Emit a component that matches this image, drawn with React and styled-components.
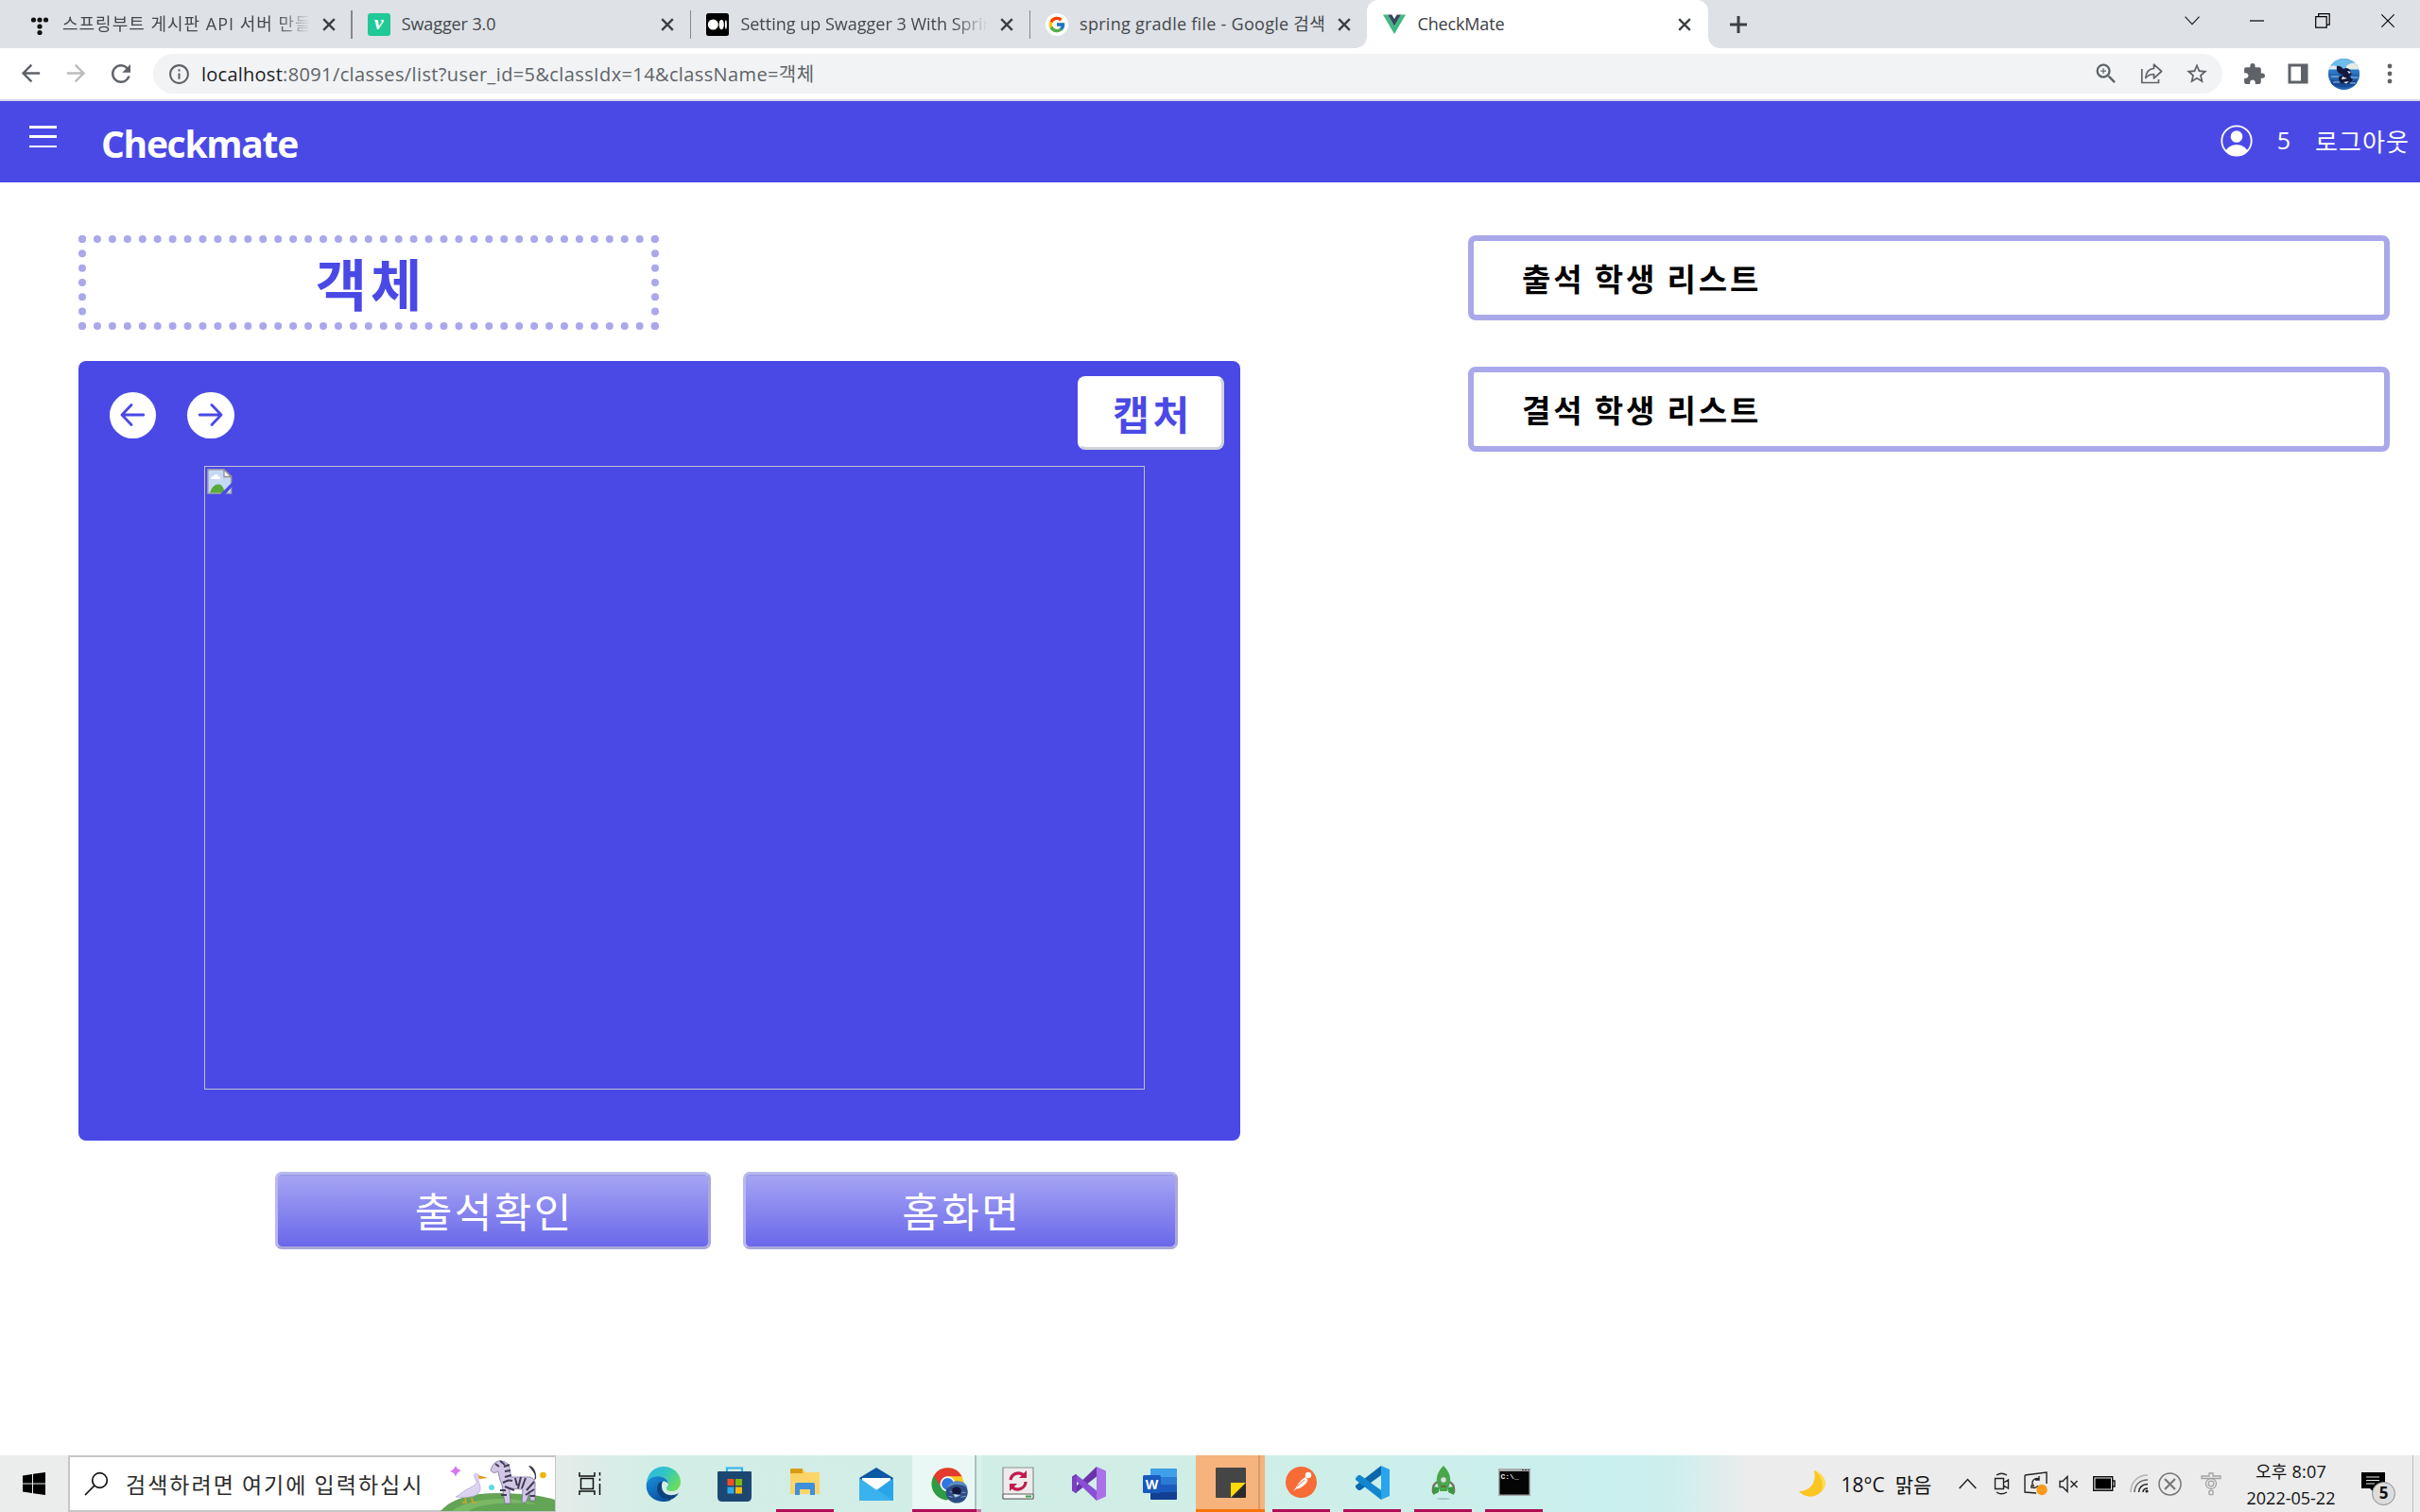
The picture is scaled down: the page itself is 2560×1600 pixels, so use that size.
import React from "react";
import styled, { createGlobalStyle, css } from "styled-components";
import { MdArrowBack, MdArrowForward, MdRefresh, MdInfoOutline, MdZoomIn, MdStarBorder, MdExtension } from "react-icons/md";

const PURPLE = "#4a49e6";
const LILAC = "#aaa8ea";
const UI = '"Open Sans", "Noto Sans CJK KR", sans-serif';
const KR = '"Noto Sans CJK KR", "Open Sans", sans-serif';

const Global = createGlobalStyle`
  * { box-sizing: border-box; }
  html, body { margin: 0; padding: 0; background: #fff; }
  body { font-family: ${UI}; overflow: hidden; }
  svg { display: block; flex: none; }
`;

const Screen = styled.div`
  width: 2560px;
  height: 1600px;
  display: flex;
  flex-direction: column;
  background: #fff;
`;

const Label = styled.span`
  display: block;
  flex: none;
  white-space: nowrap;
  font-family: ${(p) => (p.$kr ? KR : UI)};
  font-size: ${(p) => p.$size}px;
  font-weight: ${(p) => p.$weight || 400};
  letter-spacing: ${(p) => p.$track || 0}px;
  line-height: ${(p) => p.$line || p.$size * 1.4}px;
  color: ${(p) => p.$color || "inherit"};
  margin-top: ${(p) => p.$drop || 0}px;
`;

/* ---------- tab strip ---------- */

const TabStrip = styled.div`
  height: 51px;
  flex: none;
  display: flex;
  background: #dee1e6;
  padding-left: 13px;
`;

const Tab = styled.div`
  position: relative;
  width: ${(p) => p.$w || 358.7}px;
  height: 51px;
  flex: none;
  display: flex;
  align-items: center;
  padding: 0 17px;
  gap: 12px;
  color: #45484c;
  ${(p) =>
    p.$active &&
    css`
      background: #fff;
      border-radius: 12px 12px 0 0;
      color: #3c4043;
      padding-right: 18px;
      &::before,
      &::after {
        content: "";
        position: absolute;
        bottom: 0;
        width: 12px;
        height: 12px;
      }
      &::before {
        left: -12px;
        background: radial-gradient(circle at 0 0, transparent 11.5px, #fff 12px);
      }
      &::after {
        right: -12px;
        background: radial-gradient(circle at 100% 0, transparent 11.5px, #fff 12px);
      }
    `}
`;

const Divider = styled.div`
  position: absolute;
  right: -1px;
  top: 11px;
  width: 1.5px;
  height: 30px;
  background: #85888d;
`;

const TabTitle = styled.div`
  flex: 1;
  overflow: hidden;
  ${(p) => p.$fade && css`mask-image: linear-gradient(90deg, #000 calc(100% - 36px), transparent);`}
`;

const CloseBox = styled.div`
  width: 14px;
  margin-left: 1px;
  flex: none;
`;

const Velog = styled.div`
  width: 24px;
  height: 24px;
  border-radius: 3px;
  background: #20c997;
  color: #fff;
  display: flex;
  justify-content: center;
  font: italic bold 22px/20px "Liberation Serif", serif;
`;

const WindowControls = styled.div`
  margin-left: auto;
  height: 43px;
  display: flex;
  align-items: center;
`;

const ControlSlot = styled.div`
  width: 69px;
  display: flex;
  justify-content: center;
`;

const NewTab = styled.div`
  display: flex;
  align-items: center;
  padding-left: 23px;
`;

const Cross = ({ size = 14, w = 2.4, color = "#3c4043" }) => (
  <svg width={size} height={size} viewBox="0 0 14 14">
    <path d="M1.2 1.2 12.8 12.8M12.8 1.2 1.2 12.8" stroke={color} strokeWidth={w} fill="none" />
  </svg>
);

const TistoryIcon = () => (
  <svg width="24" height="24" viewBox="0 0 24 24">
    {[[5.5, 7], [12, 7], [18.5, 7], [12, 14], [12, 20.5]].map(([x, y]) => (
      <circle key={x + "-" + y} cx={x} cy={y} r="2.6" fill="#111" />
    ))}
  </svg>
);

const MediumIcon = () => (
  <svg width="24" height="24" viewBox="0 0 24 24">
    <rect width="24" height="24" rx="2.5" fill="#000" />
    <circle cx="7.3" cy="12" r="5.5" fill="#fff" />
    <ellipse cx="16.2" cy="12" rx="2.6" ry="5.3" fill="#fff" />
    <ellipse cx="20.9" cy="12" rx="1" ry="4.8" fill="#fff" />
  </svg>
);

const GoogleIcon = () => (
  <svg width="24" height="24" viewBox="0 0 24 24">
    <circle cx="12" cy="12" r="12" fill="#fff" />
    <g transform="translate(2.1 2.1) scale(.412)">
      <path fill="#FFC107" d="M43.6 20H24v8h11.3C33.7 32.7 29.2 36 24 36c-6.6 0-12-5.4-12-12s5.4-12 12-12c3.1 0 5.8 1.2 7.9 3.1l5.7-5.7C34 6 29.3 4 24 4 13 4 4 13 4 24s9 20 20 20 20-9 20-20c0-1.3-.1-2.7-.4-4z" />
      <path fill="#FF3D00" d="m6.3 14.7 6.6 4.8C14.7 15.1 19 12 24 12c3.1 0 5.8 1.2 7.9 3.1l5.7-5.7C34 6 29.3 4 24 4 16.3 4 9.7 8.3 6.3 14.7z" />
      <path fill="#4CAF50" d="M24 44c5.2 0 9.9-2 13.4-5.2l-6.2-5.2C29.2 35.1 26.7 36 24 36c-5.2 0-9.6-3.3-11.3-7.9l-6.5 5C9.5 39.6 16.2 44 24 44z" />
      <path fill="#1976D2" d="M43.6 20H24v8h11.3c-.8 2.2-2.2 4.2-4.1 5.6l6.2 5.2C37 39.2 44 34 44 24c0-1.3-.1-2.7-.4-4z" />
    </g>
  </svg>
);

const VueIcon = () => (
  <svg width="24" height="24" viewBox="0 0 24 24">
    <path d="M0 1.5h5l7 12 7-12h5L12 22z" fill="#41b883" />
    <path d="M5 1.5h4.3L12 6l2.7-4.500H19l-7 12z" fill="#35495e" />
  </svg>
);

/* ---------- address bar ---------- */

const Toolbar = styled.div`
  height: 56px;
  flex: none;
  display: flex;
  align-items: center;
  background: #fff;
  border-bottom: 2px solid #d6d6ec;
  padding: 0 20px;
`;

const Slot = styled.div`
  width: ${(p) => p.$w || 24}px;
  flex: none;
  display: flex;
  justify-content: center;
  color: ${(p) => p.$c || "#5f6368"};
`;

const NavButtons = styled.div`
  display: flex;
  gap: 24px;
  width: 142px;
  flex: none;
`;

const Omnibox = styled.div`
  width: 2189px;
  height: 42px;
  flex: none;
  border-radius: 21px;
  background: #f1f3f4;
  display: flex;
  align-items: center;
  padding: 0 15px;
  gap: 12px;
`;

const UrlText = styled.div`
  display: flex;
  flex: 1;
`;

const OmniActions = styled.div`
  display: flex;
  align-items: center;
  gap: 24px;
`;

const BrowserActions = styled.div`
  display: flex;
  align-items: center;
  margin-left: 18px;
  gap: 20px;
`;

const ShareIcon = () => (
  <svg width="24" height="24" viewBox="0 0 24 24" fill="none" stroke="#5f6368" strokeWidth="1.7">
    <path d="M1.8 7v14.5h17.7v-3.6" />
    <path d="M14.5 2.2v4.3C8.8 6.8 6.3 11 5.8 16.5c2.3-3 5-4 8.700-4v4.300L22.600 9.500z" strokeLinejoin="round" />
  </svg>
);

const PanelIcon = () => (
  <svg width="22" height="22" viewBox="0 0 22 22">
    <rect x="2" y="2" width="18" height="18" fill="#fff" stroke="#5f6368" strokeWidth="3" />
    <rect x="14" y="1" width="7" height="20" fill="#5f6368" />
  </svg>
);

const WhaleAvatar = () => (
  <svg width="33" height="33" viewBox="0 0 33 33">
    <defs>
      <clipPath id="avatar"><circle cx="16.5" cy="16.5" r="16.5" /></clipPath>
    </defs>
    <g clipPath="url(#avatar)">
      <rect width="33" height="33" fill="#2465b4" />
      <rect width="33" height="12" fill="#6fbbea" />
      <path d="M0 10c3-3 6-3 10-1v2H0zM19 8c5-4 9-4 14-1v4H19z" fill="#e9ebe6" />
      <path d="M0 12h33v4H0z" fill="#2f77c4" />
      <path d="M3 22c6 3 18 4 27 0v5c-8 5-20 4-27 0z" fill="#164a94" />
      <path d="M9 8c3-1 5 1 7 3 3-2 5-1 7 1 2 3 2 6-1 7l4 3c-2 4-7 6-12 4-3-2-4-5-2-7 1-1 3-1 4-2-5 0-8-4-7-9z" fill="#14193d" />
      <path d="M20 13l4 1-2 2zM15 19l5 2-6 1zM16 25l6-1-3 2.5z" fill="#f4f6f8" />
      <path d="M3 19h8M24 20h7M5 25h7M23 26h6" stroke="#9ccbee" strokeWidth="1" />
    </g>
  </svg>
);

/* ---------- app header ---------- */

const AppHeader = styled.header`
  height: 86px;
  flex: none;
  background: ${PURPLE};
  color: #fff;
  display: flex;
  align-items: flex-start;
  padding: 0 11px 0 31px;
`;

const MenuLines = styled.div`
  width: 29px;
  margin: 26px 47px 0 0;
  display: flex;
  flex-direction: column;
  gap: 7.8px;
  & > i {
    height: 2.5px;
    background: #fff;
  }
`;

const UserArea = styled.div`
  margin: 23.5px 0 0 auto;
  display: flex;
  align-items: center;
`;

/* ---------- page content ---------- */

const Page = styled.main`
  flex: 1;
  display: flex;
  align-items: flex-start;
  padding: 56px 32px 0 83px;
`;

const ClassColumn = styled.section`
  width: 1229px;
  margin-right: 241px;
  display: flex;
  flex-direction: column;
`;

const ClassTitle = styled.h1`
  margin: 0 0 33px;
  padding-left: 4px;
  width: 614px;
  height: 100px;
  border: 8px dotted ${LILAC};
  display: flex;
  justify-content: center;
`;

const CapturePanel = styled.div`
  height: 825px;
  border-radius: 8px;
  background: ${PURPLE};
  padding: 16px 17px 0 32.5px;
`;

const PanelTop = styled.div`
  display: flex;
  align-items: flex-start;
  height: 95px;
`;

const RoundButton = styled.button`
  width: 49.5px;
  height: 49.5px;
  margin: 16.5px 33px 0 0;
  padding: 0;
  border: 0;
  border-radius: 50%;
  background: #fff;
  display: flex;
  align-items: center;
  justify-content: center;
`;

const CaptureButton = styled.button`
  width: 155px;
  height: 78px;
  margin: 0 0 0 auto;
  padding: 0 0 0 4px;
  border: 3px solid #fff;
  border-right-color: #cfd4d8;
  border-bottom-color: #cfd4d8;
  border-radius: 8px;
  background: #fff;
  display: flex;
  justify-content: center;
`;

const MissingImage = styled.div`
  width: 995px;
  height: 660px;
  margin-left: 100.5px;
  border: 1px solid #c0c0d6;
  padding: 2px;
`;

const BrokenIcon = () => (
  <svg width="27" height="27" viewBox="0 0 27 27">
    <path d="M1 1h17l7.5 7v18H1z" fill="#c6d9f5" stroke="#a6a6a6" strokeWidth="1.5" />
    <path d="M4 11c0-3 3-3 3.500-4 2-2 4-1 4.500 1 3 0 2 3 1 3z" fill="#fff" />
    <path d="M3 25.500c2-6 5-9 9-9 3 0 5 2 7 9z" fill="#5aa93c" />
    <path d="M18 1v7.500h7.500z" fill="#fff" stroke="#8d8d8d" strokeWidth="1.300" />
    <path d="M27 14 14 27h5.500L27 18.500z" fill={PURPLE} />
  </svg>
);

const ActionRow = styled.div`
  display: flex;
  gap: 34px;
  margin: 33px 0 0 208px;
`;

const ActionButton = styled.button`
  width: 460.5px;
  height: 82px;
  padding: 0 0 0 3px;
  border: 3px solid;
  border-color: #b9b8f0 #a9a8de #a9a8d8 #b9b8f0;
  border-radius: 7px;
  background: linear-gradient(#a6a5f3, #6a68ea) padding-box;
  box-shadow: inset 0 1px 0 #9796e3;
  color: #fff;
  display: flex;
  justify-content: center;
`;

const ListColumn = styled.section`
  flex: 1;
  display: flex;
  flex-direction: column;
  gap: 49px;
`;

const ListBox = styled.div`
  height: 90px;
  border: 6px solid ${LILAC};
  border-radius: 8px;
  padding-left: 51px;
  color: #000;
`;

/* ---------- taskbar ---------- */

const Taskbar = styled.footer`
  height: 60px;
  flex: none;
  display: flex;
  background: linear-gradient(90deg, #ebecec 0, #eaecec 560px, #d2ede5 690px, #d0eee6 1250px, #c9efee 1700px, #cdeeed 1770px, #ececec 1850px);
`;

const StartButton = styled.div`
  width: 72px;
  display: flex;
  align-items: center;
  justify-content: center;
`;

const SearchBox = styled.div`
  width: 516px;
  height: 60px;
  background: #fff;
  border: 2px solid #c6c6c6;
  border-right-width: 1px;
  display: flex;
  align-items: flex-start;
  padding-left: 15px;
`;

const SearchArt = styled.div`
  margin: -1px 0 0 auto;
`;

const TaskViewSlot = styled.div`
  width: 76px;
  padding-right: 3px;
  display: flex;
  align-items: center;
  justify-content: center;
`;

const AppSlot = styled.div`
  width: 75px;
  height: 60px;
  flex: none;
  display: flex;
  flex-direction: column;
  align-items: center;
  justify-content: space-between;
`;

const AppTile = styled.div`
  width: 73px;
  flex: 1;
  display: flex;
  align-items: center;
  justify-content: center;
  background: ${(p) => p.$bg || "transparent"};
`;

const RunBar = styled.div`
  width: ${(p) => p.$w || 61}px;
  height: 3px;
  background: ${(p) => p.$c || "#b10d55"};
`;

const Tray = styled.div`
  margin-left: auto;
  width: 660px;
  display: flex;
  align-items: center;
  color: #111;
`;

const TrayItem = styled.div`
  width: ${(p) => p.$w}px;
  padding-right: ${(p) => p.$pr || 0}px;
  flex: none;
  display: flex;
  justify-content: center;
`;

const Clock = styled.div`
  width: 123px;
  height: 60px;
  padding-right: 10px;
  display: flex;
  flex-direction: column;
  align-items: center;
`;

const Notice = styled.div`
  position: relative;
  width: 40px;
  height: 60px;
`;

const NoticeIcon = styled.div`
  padding: 18px 0 0 8px;
`;

const NoticeCount = styled.div`
  position: absolute;
  left: 19px;
  top: 28px;
  width: 25px;
  height: 25px;
  border-radius: 50%;
  border: 1.5px solid #8b8b8b;
  background: #dcdcdc;
  display: flex;
  justify-content: center;
`;

const DesktopEdge = styled.div`
  width: 1.5px;
  height: 60px;
  margin-left: 21.5px;
  background: #bdbdbd;
`;

const SearchScene = () => (
  <svg width="121" height="58" viewBox="468 1541 121 58">
    <path d="M468 1599c12-14 34-19 60-19 22 0 45 2 61 7v12z" fill="#63a455" />
    <path d="M480 1599c16-13 60-18 90-7-20-3-60-2-72 7z" fill="#7ab866" />
    <path d="M484 1551c1 3 3 4 6 5-3 1-5 3-6 7-1-4-3-5-6-6 3-1 5-3 6-6z" fill="#da74ee" />
    <circle cx="522" cy="1574" r="3" fill="#5cdbe2" />
    <circle cx="576.5" cy="1561" r="3.3" fill="#f0b40e" />
    <path d="M504 1560c4-2 6 2 4 5-1 3 3 6 2 11-2 9-14 9-26 8 6-3 9-7 14-9 5-3 9-4 8-8-1-2-3-4-2-7z" fill="#dcd3ef" stroke="#b8abd6" strokeWidth=".8" />
    <path d="M508 1561l10 3-9 1z" fill="#e39a1c" />
    <path d="M494 1585l1 5h-4M501 1585l1 5h4" stroke="#d6a722" strokeWidth="1.6" fill="none" />
    <path d="M521 1556c2-7 6-11 12-10 8 1 9 9 9 17h19c5 0 8 4 7 10v15h-5l-1-10c-1 5-2 9-4 12h-4l1-14-14-1 1 16h-6l-3-20c-3-6-3-10-4-14-3 2-6 2-8-1z" fill="#d1c6e4" stroke="#77709a" strokeWidth=".8" />
    <path d="M531 1546l5 4M535 1552l6-2M536 1557l6-1M536 1563l7-2M534 1569c6-3 7-3 10-2M547 1564l2 8M553 1563l-3 12M558 1564l-4 11M567 1568l-8 9M567 1576l-9 6M532 1582h6M531 1577h6M563 1583h5M536 1573l10 4M526 1549l4 3" stroke="#3f3b52" strokeWidth="2" fill="none" />
    <path d="M567 1566c3-6-2-9-6-15 6 0 9 8 8 14z" fill="#3f3b52" />
  </svg>
);

const EdgeIcon = () => (
  <svg width="37" height="37" viewBox="0 0 37 37">
    <defs>
      <linearGradient id="eg1" x1="0" y1="0" x2="1" y2=".6"><stop offset="0" stopColor="#2fb6e6" /><stop offset=".5" stopColor="#30c5c7" /><stop offset="1" stopColor="#68dd5e" /></linearGradient>
      <linearGradient id="eg2" x1="0" y1="0" x2=".6" y2="1"><stop offset="0" stopColor="#1793dd" /><stop offset="1" stopColor="#0b4f9f" /></linearGradient>
    </defs>
    <path d="M1 17C2 7 9 0 19 0c11 0 18 8 18 16 0 6-4 10-9 10-4 0-6-1-6-3s2-2 2-5c0-4-5-8-11-8C7 10 3 13 1 17z" fill="url(#eg1)" />
    <path d="M1 17c2-4 6-7 12-7 6 0 11 4 11 8-2-2-4-3-6-2-4 1-6 5-4 11 2 5 7 8 13 8-3 2-6 2-9 2C7 37-1 28 1 17z" fill="url(#eg2)" />
    <path d="M14 17c-5 9 1 18 12 18 4-1 7-4 9-7-9 5-18 1-18-7 0-2 0-3 1-5-2 0-3 0-4 1z" fill="#0c437f" />
  </svg>
);

const StoreIcon = () => (
  <svg width="36" height="37" viewBox="0 0 36 37">
    <path d="M10 8V1.500h16V8" fill="none" stroke="#2fb4e8" strokeWidth="2.2" />
    <path d="M0 6q0-1 1-1h34q1 0 1 1v26q0 5-5 5H5q-5 0-5-5z" fill="#1d4773" />
    <path d="M10.5 13h7v7h-7z" fill="#f25022" /><path d="M19 13h7v7h-7z" fill="#7fba00" />
    <path d="M10.5 21.5h7v7h-7z" fill="#2fa9ee" /><path d="M19 21.5h7v7h-7z" fill="#ffb900" />
  </svg>
);

const ExplorerIcon = () => (
  <svg width="33" height="29" viewBox="0 0 33 29">
    <path d="M1 1q0-1 1-1h11q1 0 2 1.5L17 4h14q1 0 1 1v21H1z" fill="#f8cf5c" />
    <path d="M1 1q0-1 1-1h11q1 0 1 1v4H1z" fill="#d99c17" />
    <path d="M1 7l14-1 2-2h15v23H1z" fill="#fcd568" />
    <path d="M6 28V17q0-2 2-2h17q2 0 2 2v11h-5v-6H11v6z" fill="#3e90dc" />
  </svg>
);

const MailIcon = () => (
  <svg width="36" height="35" viewBox="0 0 36 35">
    <path d="M0 11 18 0l18 11v4H0z" fill="#0c59a4" />
    <path d="M3 11h30v14H3z" fill="#fff" />
    <path d="M0 11l18 13L36 11v24H0z" fill="#28a5e8" />
    <path d="M0 11l36 24H0z" fill="#48bdf3" opacity=".55" />
  </svg>
);

const ChromeTaskIcon = () => (
  <svg width="44" height="44" viewBox="-4.5 -6.3 44 44">
    <circle cx="18" cy="17" r="17" fill="#fbc81b" />
    <path d="M3.3 8.500A17 17 0 0 0 18 34l7-13-7-4z" fill="#2c9c46" />
    <path d="M3.3 8.500A17 17 0 0 1 33 9H18l-7.500 11z" fill="#e33b2e" />
    <circle cx="18" cy="17" r="8" fill="#fff" />
    <circle cx="18" cy="17" r="6.3" fill="#2f76e0" />
    <circle cx="27.7" cy="25.7" r="11.500" fill="#2c4d86" />
    <path d="M17 22c6-6 16-5 22-1-2-5-5-7-11-7s-10 4-11 8z" fill="#5c8cc4" />
    <path d="M23 22c3-3 8-2 9 1 1 4-2 7-7 7-2-2-3-5-2-8z" fill="#14183c" />
    <path d="M24 28l7 1-5 2zM19 30l4 1M32 31l5-1M20 25l3 1M33 26l4 0" fill="#dfe8f2" stroke="#8bb0d6" strokeWidth=".9" />
  </svg>
);

const DiskSyncIcon = () => (
  <svg width="34" height="36" viewBox="0 0 34 36">
    <path d="M1 1h32v33H1z" fill="#ececec" stroke="#8f8f8f" strokeWidth="1.2" />
    <path d="M1 29h32v5H1z" fill="#f8f8f8" stroke="#5f5f5f" />
    <path d="M25 31.500h6" stroke="#37a34a" strokeWidth="2" />
    <path d="M9 14a8.500 8.500 0 0 1 14-5M25 16a8.500 8.500 0 0 1-14 6" fill="none" stroke="#c11b4d" strokeWidth="3.2" />
    <path d="M26 4v8h-8zM8 26v-8h8z" fill="#c11b4d" />
  </svg>
);

const VisualStudioIcon = () => (
  <svg width="36" height="36" viewBox="0 0 36 36">
    <path d="M26 0v10.500L4 28l-4-3z" fill="#6a33ab" />
    <path d="M4 8l22 17.500V36L0 11z" fill="#8a4fd3" />
    <path d="M0 10.500 4 8l1 1v18l-1 1-4-2.500z" fill="#7a3fc2" />
    <path d="M26 0l10 4.500v27L26 36z" fill="#a970e8" />
  </svg>
);

const WordIcon = () => (
  <svg width="36" height="33" viewBox="0 0 36 33">
    <rect x="8" width="28" height="33" rx="1.5" fill="#1a5cbe" />
    <path d="M8 1.500Q8 0 9.500 0h25Q36 0 36 1.500V9H8z" fill="#3f9fea" />
    <path d="M8 9h28v8H8z" fill="#2a7bd4" />
    <path d="M8 25h28v6.500q0 1.500-1.500 1.500h-25Q8 33 8 31.500z" fill="#123f91" />
    <rect y="7" width="19" height="19" rx="1.5" fill="#185abd" />
    <text x="9.5" y="21.5" textAnchor="middle" fontFamily="Open Sans, sans-serif" fontWeight="700" fontSize="14" fill="#fff">W</text>
  </svg>
);

const StickyIcon = () => (
  <svg width="32" height="32" viewBox="0 0 32 32">
    <path d="M1 0h30q1 0 1 1v15L16 32H1q-1 0-1-1V1q0-1 1-1z" fill="#454545" />
    <path d="M16 32V16h16z" fill="#ffd90a" />
    <path d="M16 32 32 16v15q0 1-1 1z" fill="#2b2b2b" />
  </svg>
);

const PostmanIcon = () => (
  <svg width="33" height="33" viewBox="0 0 33 33">
    <circle cx="16.5" cy="16.5" r="16.5" fill="#f76b36" />
    <circle cx="24" cy="9" r="3.2" fill="#fff" />
    <path d="M8 26l3-4c2-4 6-9 10-11l2.500 3c-1 4-5 7-9 9l-3 .5z" fill="#fff" />
    <path d="M12 21 20 14" stroke="#f76b36" strokeWidth="1" />
  </svg>
);

const VSCodeIcon = () => (
  <svg width="36" height="36" viewBox="0 0 36 36">
    <path d="M27 0v10L5 26H3l-3-3v-2z" fill="#0b69ab" />
    <path d="M0 13l3-3h2l22 16v10L0 15z" fill="#1287d0" />
    <path d="M27 0l9 4v28l-9 4z" fill="#29a5ee" />
  </svg>
);

const RocketIcon = () => (
  <svg width="28" height="36" viewBox="0 0 28 36">
    <ellipse cx="14" cy="35" rx="7" ry="1" fill="#a9c6c2" />
    <path d="M8 17c-5 2-6 6-5 12M20 17c5 2 6 6 5 12" fill="none" stroke="#7d6b57" strokeWidth="2" />
    <path d="M3 22l6 1v5l-6 3zM25 22l-6 1v5l6 3z" fill="#3c9a40" />
    <path d="M14 0c6 6 8 12 7 18l-3 9h-8l-3-9C6 12 8 6 14 0z" fill="#46a849" />
    <circle cx="14" cy="15" r="3.3" fill="#cfe8d2" stroke="#6d8f70" />
    <path d="M11 22h6" stroke="#8b3f2f" strokeWidth="1.2" />
  </svg>
);

const TerminalIcon = () => (
  <svg width="34" height="29" viewBox="0 0 34 29">
    <rect width="34" height="29" fill="#a7abac" />
    <rect x="1.5" y="3" width="31" height="24.5" fill="#050505" />
    <path d="M25 1.500h2M28 1.500h2M31 1.500h1.500" stroke="#333" strokeWidth="1.2" />
    <text x="2.5" y="11" fontFamily="Liberation Mono, monospace" fontWeight="700" fontSize="8" fill="#eee">C:\_</text>
  </svg>
);

const APPS = [
  { id: "edge", icon: <EdgeIcon /> },
  { id: "store", icon: <StoreIcon /> },
  { id: "explorer", icon: <ExplorerIcon />, bar: true },
  { id: "mail", icon: <MailIcon /> },
  { id: "chrome", icon: <ChromeTaskIcon />, bar: true, wide: true, bg: "linear-gradient(90deg,#eaf8f5 66px,#a9c2bd 66px,#a9c2bd 68px,#d9f1ec 68px)", barColor: "linear-gradient(90deg,#b10d55 68px,#c877a0 68px)" },
  { id: "disk", icon: <DiskSyncIcon /> },
  { id: "vs", icon: <VisualStudioIcon /> },
  { id: "word", icon: <WordIcon /> },
  { id: "sticky", icon: <StickyIcon />, bar: true, wide: true, bg: "linear-gradient(90deg,#f6b37b 66px,#d49a6e 66px,#d49a6e 68px,#f6b37b 68px)", barColor: "#f7740b" },
  { id: "postman", icon: <PostmanIcon />, bar: true },
  { id: "code", icon: <VSCodeIcon />, bar: true },
  { id: "rocket", icon: <RocketIcon />, bar: true },
  { id: "cmd", icon: <TerminalIcon />, bar: true },
];

const TABS = [
  { id: 1, icon: <TistoryIcon />, title: "스프링부트 게시판 API 서버 만들", fade: true, track: 1 },
  { id: 2, icon: <Velog>v</Velog>, title: "Swagger 3.0", track: -0.1 },
  { id: 3, icon: <MediumIcon />, title: "Setting up Swagger 3 With Sprin", fade: true, track: 0 },
  { id: 4, icon: <GoogleIcon />, title: "spring gradle file - Google 검색", track: 0.27, w: 357.4 },
  { id: 5, icon: <VueIcon />, title: "CheckMate", active: true, track: -0.15, w: 360.5 },
];

export default function App() {
  return (
    <Screen>
      <Global />
      <TabStrip>
        {TABS.map((t) => (
          <Tab key={t.id} $active={t.active} $w={t.w}>
            {t.icon}
            <TabTitle $fade={t.fade}>
              <Label $size={18} $track={t.track}>{t.title}</Label>
            </TabTitle>
            <CloseBox><Cross /></CloseBox>
            {t.id < 4 && <Divider />}
          </Tab>
        ))}
        <NewTab>
          <svg width="18" height="18" viewBox="0 0 18 18"><path d="M9 0v18M0 9h18" stroke="#3c4043" strokeWidth="3" /></svg>
        </NewTab>
        <WindowControls>
          <ControlSlot><svg width="16" height="10" viewBox="0 0 16 10"><path d="M.5.7 8 8.7 15.500.7" fill="none" stroke="#222" strokeWidth="1.2" /></svg></ControlSlot>
          <ControlSlot><svg width="15" height="2" viewBox="0 0 15 2"><path d="M0 1h15" stroke="#000" strokeWidth="1.2" /></svg></ControlSlot>
          <ControlSlot><svg width="16" height="16" viewBox="0 0 16 16"><path d="M.7 3.700h11.500v11.500H.7zM3.700 3.500V.7h11.500v11.500h-3" fill="none" stroke="#000" strokeWidth="1.2" /></svg></ControlSlot>
          <ControlSlot><Cross size={16} w={1} color="#000" /></ControlSlot>
        </WindowControls>
      </TabStrip>

      <Toolbar>
        <NavButtons>
          <Slot><MdArrowBack size={29} /></Slot>
          <Slot $c="#babcbe"><MdArrowForward size={29} /></Slot>
          <Slot><MdRefresh size={30} /></Slot>
        </NavButtons>
        <Omnibox>
          <Slot><MdInfoOutline size={25} /></Slot>
          <UrlText>
            <Label $size={20} $track={0.25} $drop={1} $color="#202124">localhost</Label>
            <Label $size={20} $track={0.38} $drop={1} $color="#5f6368">:8091/classes/list?user_id=5&amp;classIdx=14&amp;className=객체</Label>
          </UrlText>
          <OmniActions>
            <Slot><MdZoomIn size={28} /></Slot>
            <Slot><ShareIcon /></Slot>
            <Slot><MdStarBorder size={26} /></Slot>
          </OmniActions>
        </Omnibox>
        <BrowserActions>
          <Slot $w={30}><MdExtension size={25} /></Slot>
          <Slot><PanelIcon /></Slot>
          <WhaleAvatar />
          <Slot><svg width="6" height="22" viewBox="0 0 6 22"><circle cx="3" cy="3" r="2.4" fill="#5f6368" /><circle cx="3" cy="11" r="2.4" fill="#5f6368" /><circle cx="3" cy="19" r="2.4" fill="#5f6368" /></svg></Slot>
        </BrowserActions>
      </Toolbar>

      <AppHeader>
        <MenuLines><i /><i /><i /></MenuLines>
        <Label $size={39} $weight={700} $line={52} $drop={19} $track={-1.3}>Checkmate</Label>
        <UserArea>
          <svg width="34" height="34" viewBox="0 0 34 34">
            <defs><clipPath id="face"><circle cx="17" cy="17" r="15.5" /></clipPath></defs>
            <circle cx="17" cy="17" r="15.7" fill="none" stroke="#fff" strokeWidth="1.8" />
            <circle cx="17" cy="12.5" r="6.3" fill="#fff" />
            <ellipse cx="17" cy="30" rx="11.8" ry="9" fill="#fff" clipPath="url(#face)" />
          </svg>
          <Slot $w={66}><Label $size={25} $color="#fff">5</Label></Slot>
          <Label $kr $size={26} $track={1.1}>로그아웃</Label>
        </UserArea>
      </AppHeader>

      <Page>
        <ClassColumn>
          <ClassTitle><Label $kr $size={59} $weight={700} $line={84} $track={4} $color={PURPLE}>객체</Label></ClassTitle>
          <CapturePanel>
            <PanelTop>
              <RoundButton><svg width="26" height="24" viewBox="0 0 26 24"><path d="M25 12H2M12 1.500 2 12l10 10.500" fill="none" stroke={PURPLE} strokeWidth="2.8" strokeLinecap="round" strokeLinejoin="round" /></svg></RoundButton>
              <RoundButton><svg width="26" height="24" viewBox="0 0 26 24"><path d="M1 12h23M14 1.500 24 12 14 22.500" fill="none" stroke={PURPLE} strokeWidth="2.8" strokeLinecap="round" strokeLinejoin="round" /></svg></RoundButton>
              <CaptureButton><Label $kr $size={42} $weight={700} $line={71} $track={3.5} $color={PURPLE}>캡처</Label></CaptureButton>
            </PanelTop>
            <MissingImage><BrokenIcon /></MissingImage>
          </CapturePanel>
          <ActionRow>
            <ActionButton><Label $kr $size={43} $line={74} $track={2.4}>출석확인</Label></ActionButton>
            <ActionButton><Label $kr $size={43} $line={74} $track={2.4}>홈화면</Label></ActionButton>
          </ActionRow>
        </ClassColumn>
        <ListColumn>
          <ListBox><Label $kr $size={33} $weight={700} $line={78} $track={2.85}>출석 학생 리스트</Label></ListBox>
          <ListBox><Label $kr $size={33} $weight={700} $line={78} $track={2.85}>결석 학생 리스트</Label></ListBox>
        </ListColumn>
      </Page>

      <Taskbar>
        <StartButton>
          <svg width="24" height="24" viewBox="0 0 24 24"><path d="M0 3.400 10 2v9.500H0zM11 1.800 24 0v11.500H11zM0 12.500h10V22L0 20.600zM11 12.500h13V24l-13-1.800z" fill="#000" /></svg>
        </StartButton>
        <SearchBox>
          <svg width="26" height="60" viewBox="0 0 26 60"><circle cx="16.5" cy="24.5" r="7.8" fill="none" stroke="#111" strokeWidth="1.7" /><path d="M11 30 1 40" stroke="#111" strokeWidth="1.7" /></svg>
          <Slot $w={18} />
          <Label $kr $size={23} $line={57} $track={2} $color="#2b2b2b">검색하려면 여기에 입력하십시</Label>
          <SearchArt><SearchScene /></SearchArt>
        </SearchBox>
        <TaskViewSlot>
          <svg width="26" height="26" viewBox="0 0 26 26"><path d="M1 1v4h16V1M1 25v-4h16v4M2.500 7.500h13v11h-13zM22.500 1v3.500M22.500 7.500V10M22.500 13v12" fill="none" stroke="#111" strokeWidth="1.5" /></svg>
        </TaskViewSlot>
        {APPS.map((a) => (
          <AppSlot key={a.id}>
            <AppTile $bg={a.bg}>{a.icon}</AppTile>
            {a.bar && <RunBar $w={a.wide ? 73 : 61} $c={a.barColor} />}
          </AppSlot>
        ))}
        <Tray>
          <TrayItem $w={34}>
            <svg width="28" height="28" viewBox="0 0 28 28"><path d="M16 0c12 4 15 15 8 22-7 8-18 7-24 0 12 0 19-9 16-22z" fill="#fcc522" /><path d="M16 0c12 4 15 15 8 22 2-8 0-17-8-22z" fill="#ffdc52" /></svg>
          </TrayItem>
          <TrayItem $w={128} $pr={5}><Label $size={21} $line={32} $drop={1}>18°C&nbsp; 맑음</Label></TrayItem>
          <TrayItem $w={38}><svg width="19" height="12" viewBox="0 0 19 12"><path d="M.7 11 9.500 1.500 18.300 11" fill="none" stroke="#222" strokeWidth="1.5" /></svg></TrayItem>
          <TrayItem $w={36}><svg width="18" height="24" viewBox="0 0 18 24"><path d="M1.500 6.500h9v11h-9zM10.500 11l5-3v9l-5-3zM3 3q5-3.500 11 0M3 21q5 3.500 11 0" fill="none" stroke="#222" strokeWidth="1.4" /></svg></TrayItem>
          <TrayItem $w={35}><svg width="26" height="26" viewBox="0 0 26 26"><path d="M1 4 24 1v12M1 4v18l12 1M16 8a5 5 0 0 0-7 3v3M9 17a5 5 0 0 0 6-2M16 5v4h-4M8 18v-3h3" fill="none" stroke="#222" strokeWidth="1.4" /><circle cx="19" cy="19.5" r="5.7" fill="#fb9a1c" /></svg></TrayItem>
          <TrayItem $w={36} $pr={2}><svg width="21" height="19" viewBox="0 0 21 19"><path d="M1 6.500h3L9 1.500v16L4 12.500H1zM12.500 6l7 7M19.500 6l-7 7" fill="none" stroke="#222" strokeWidth="1.4" /></svg></TrayItem>
          <TrayItem $w={38}><svg width="24" height="16" viewBox="0 0 24 16"><path d="M.7.7h20v14.600h-20zM21 5h2v6h-2" fill="none" stroke="#111" strokeWidth="1.4" /><path d="M2.500 2.500h16.500v11H2.500z" fill="#000" /></svg></TrayItem>
          <TrayItem $w={36}><svg width="20" height="20" viewBox="0 0 20 20" fill="none"><path d="M1 19C1 9 8 1 19 1" stroke="#b3b3b3" strokeWidth="1.5" /><path d="M5 19C5 11 11 6 19 6" stroke="#666" strokeWidth="1.5" /><path d="M9.500 19c0-5 4-8.500 9.500-8.500M14 19c0-2.500 2-4 5-4" stroke="#222" strokeWidth="1.5" /><circle cx="18" cy="18" r="1.6" fill="#222" /></svg></TrayItem>
          <TrayItem $w={32} $pr={4}><svg width="25" height="25" viewBox="0 0 25 25"><circle cx="12.5" cy="12.5" r="11.5" fill="none" stroke="#777" strokeWidth="1.5" /><path d="m7 7 11 11M18 7 7 18" stroke="#777" strokeWidth="2.2" /></svg></TrayItem>
          <TrayItem $w={54} $pr={3}><svg width="22" height="25" viewBox="0 0 22 25" fill="none" stroke="#a3a3a3" strokeWidth="1.3"><path d="M9 1h4v3h8v2.500H1V4h8z" /><circle cx="11" cy="12" r="5.5" /><circle cx="11" cy="12" r="2.8" /><circle cx="11" cy="21.5" r="2.3" /></svg></TrayItem>
          <Clock>
            <Label $size={18} $line={28} $drop={3} $track={0.2}>오후 8:07</Label>
            <Label $size={18} $line={28}>2022-05-22</Label>
          </Clock>
          <Notice>
            <NoticeIcon><svg width="25" height="24" viewBox="0 0 25 24"><path d="M0 0h25v17H15v6l-6-6H0z" fill="#000" /><path d="M5 5h14M5 8.500h14M5 12h9" stroke="#e8e8e8" strokeWidth="1.2" /></svg></NoticeIcon>
            <NoticeCount><Label $size={17} $weight={700} $line={22}>5</Label></NoticeCount>
          </Notice>
          <DesktopEdge />
        </Tray>
      </Taskbar>
    </Screen>
  );
}
